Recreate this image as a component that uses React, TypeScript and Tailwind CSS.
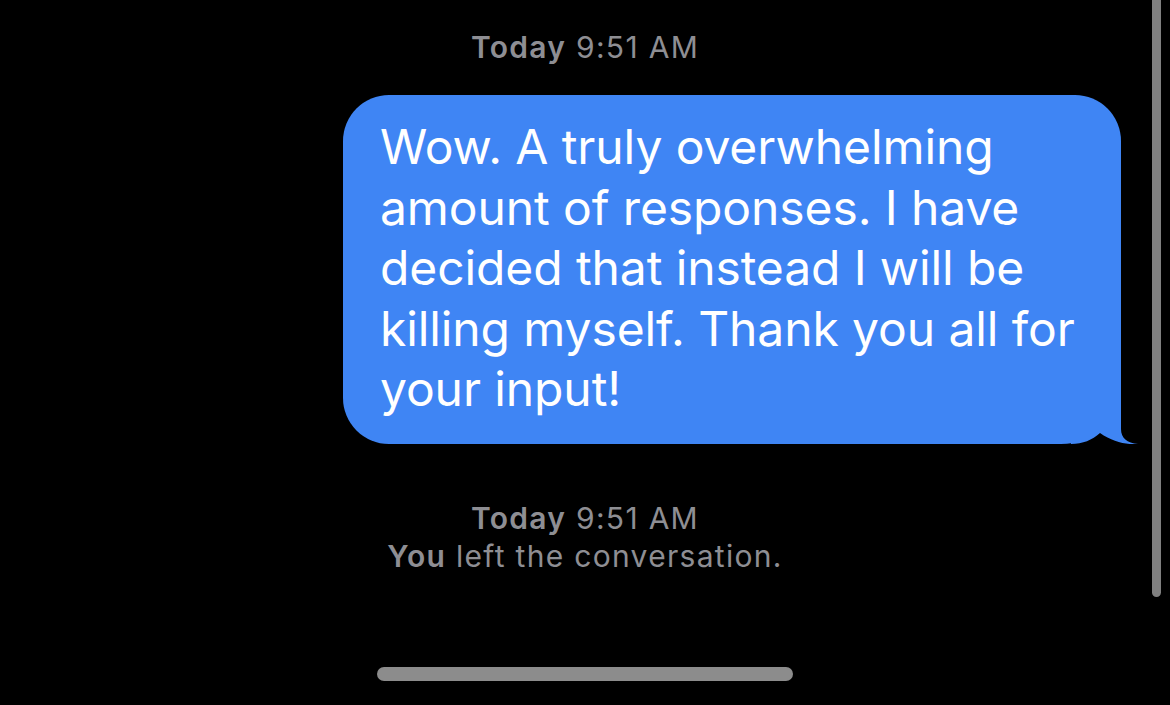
export default function App() {
    return (
        <div
            className="relative h-[705px] w-[1170px] overflow-hidden bg-black"
            style={{ fontFamily: "Inter, 'Noto Sans', 'Liberation Sans', sans-serif" }}
        >
            <div className="flex flex-col items-center pt-[29px]">
                {/* top timestamp */}
                <p className="text-[30px] leading-[36px] tracking-[1.3px] text-[#8e8e93]">
                    <span className="font-semibold">Today</span> 9:51 AM
                </p>

                {/* sent bubble */}
                <div className="mt-[30px] flex w-full justify-end pr-[49px]">
                    <div className="relative w-[778px] rounded-[46px] rounded-br-[60px] bg-[#3f85f4] pt-[22px] pb-[24px] pl-[37px] pr-[20px]">
                        <p className="text-[48px] leading-[60.5px] tracking-[-0.1px] text-white">
                            Wow. A truly overwhelming amount of responses. I have decided that instead I will be
                            killing myself. Thank you all for your input!
                        </p>
                        <svg
                            className="absolute bottom-0 right-[-18px]"
                            width="80"
                            height="60"
                            viewBox="0 0 80 60"
                        >
                            <path
                                d="M62 0 L62 45 C62 54 68 59 79 60 C68 61 54 58 41 49 C33 56 24 60 12 60 L12 0 Z"
                                fill="#3f85f4"
                            />
                        </svg>
                    </div>
                </div>

                {/* status */}
                <div className="mt-[55px] flex flex-col items-center text-[30px] leading-[38px] tracking-[1.3px] text-[#8e8e93]">
                    <p>
                        <span className="font-semibold">Today</span> 9:51 AM
                    </p>
                    <p>
                        <span className="font-semibold">You</span> left the conversation.
                    </p>
                </div>

                {/* home indicator */}
                <div className="mt-[92px] h-[14px] w-[416px] rounded-full bg-[#8c8c8c]" />
            </div>

            {/* scroll indicator */}
            <div className="absolute right-[9px] top-[-10px] h-[607px] w-[9px] rounded-full bg-[#808080]" />
        </div>
    )
}
